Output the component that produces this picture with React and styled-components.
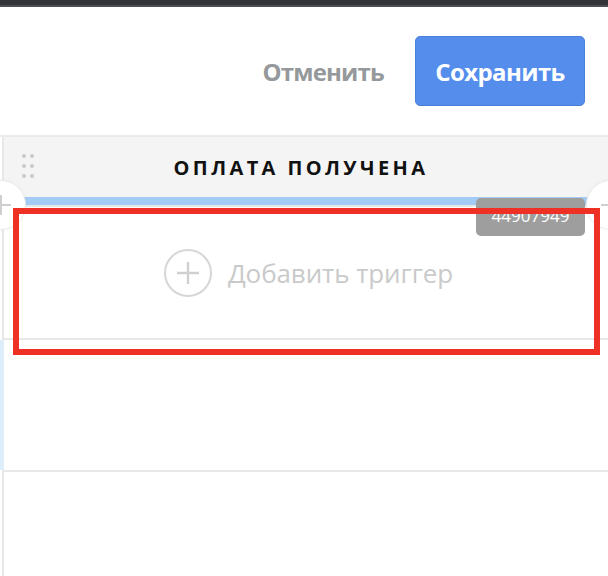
import React from 'react'
import styled, { createGlobalStyle } from 'styled-components';

const GlobalStyle = createGlobalStyle`
  html, body {
    margin: 0;
    padding: 0;
    height: 100%;
    overflow: hidden;
    background: #fff;
    font-family: 'Open Sans', 'Noto Sans', sans-serif;
  }
  #root {
    height: 100%;
  }
`;

const Page = styled.div`
  display: flex;
  flex-direction: column;
  height: 100vh;
`;

const TopBar = styled.div`
  height: 5px;
  background: #333438;
  border-bottom: 2px solid #4e4f52;
  flex-shrink: 0;
`;

const Header = styled.div`
  height: 128px;
  display: flex;
  align-items: center;
  justify-content: flex-end;
  gap: 31px;
  padding-right: 23px;
  flex-shrink: 0;
`;

const CancelButton = styled.button`
  border: none;
  background: none;
  padding: 0;
  font-family: 'Open Sans', sans-serif;
  font-weight: 700;
  font-size: 24px;
  letter-spacing: -0.8px;
  color: #95999b;
  cursor: pointer;
`;

const SaveButton = styled.button`
  width: 170px;
  height: 70px;
  border: 1px solid #4a80dc;
  border-radius: 5px;
  background: #558ded;
  color: #fff;
  font-family: 'Open Sans', sans-serif;
  font-weight: 700;
  font-size: 24px;
  letter-spacing: -0.6px;
  cursor: pointer;
`;

const Board = styled.div`
  flex: 1;
  display: flex;
  border-top: 2px solid #ebebeb;
  padding-left: 2px;
  overflow: hidden;
`;

const Column = styled.div`
  position: relative;
  flex: 1;
  display: flex;
  flex-direction: column;
  border-left: 2px solid #e8e8e8;
`;

const ColumnHeader = styled.div`
  height: 60px;
  background: #f4f4f4;
  display: flex;
  align-items: center;
  justify-content: center;
  padding-right: 10px;
  position: relative;
`;

const DragHandle = styled.div`
  position: absolute;
  left: 18px;
  top: 17px;
  display: grid;
  grid-template-columns: 4px 4px;
  gap: 6px 4px;
  span {
    width: 4px;
    height: 4px;
    border-radius: 50%;
    background: #c9c9c9;
  }
`;

const Title = styled.div`
  font-family: 'Open Sans', sans-serif;
  font-weight: 700;
  font-size: 20px;
  letter-spacing: 3.4px;
  color: #111;
  text-transform: uppercase;
`;

const StageBar = styled.div`
  height: 8px;
  background: #a4cbf5;
`;

const Row = styled.div`
  position: relative;
  height: ${({ $h }) => $h}px;
  flex: ${({ $grow }) => ($grow ? 1 : 'none')};
  border-top: ${({ $top }) => ($top ? '2px solid #e8e8e8' : 'none')};
  border-bottom: ${({ $grow }) => ($grow ? 'none' : '2px solid #e8e8e8')};
  display: flex;
  align-items: center;
  justify-content: center;

  &::before {
    content: '';
    display: ${({ $accent }) => ($accent ? 'block' : 'none')};
    position: absolute;
    left: -4px;
    top: 0;
    bottom: 0;
    width: 4px;
    background: #deedfa;
  }
`;

const AddTrigger = styled.button`
  display: flex;
  align-items: center;
  gap: 15px;
  border: none;
  background: none;
  padding: 0 0 0 4px;
  color: #c9caca;
  font-family: 'Open Sans', sans-serif;
  font-weight: 400;
  font-size: 26px;
  letter-spacing: -0.1px;
  cursor: pointer;
`;

const EdgeCircle = styled.div`
  position: absolute;
  top: 43px;
  ${({ $side }) => ($side === 'left' ? 'left: -28px;' : 'right: -28px;')}
  width: 48px;
  height: 48px;
  border-radius: 50%;
  background: #fff;
  border: 1px solid #ececec;
  box-shadow: 0 0 4px rgba(0, 0, 0, 0.04);
  display: flex;
  align-items: center;
  justify-content: center;
  color: #c8c8c8;
  z-index: 2;
`;

const IdBadge = styled.div`
  position: absolute;
  top: 61px;
  right: 23px;
  width: 109px;
  height: 38px;
  border-radius: 5px;
  background: #9e9e9e;
  color: #fff;
  font-family: 'Open Sans', sans-serif;
  font-size: 17px;
  display: flex;
  justify-content: center;
  padding-top: 6px;
  box-sizing: border-box;
  z-index: 3;
`;

const Highlight = styled.div`
  position: absolute;
  left: 9px;
  top: 71px;
  width: 587px;
  height: 147px;
  border: 6px solid #ee3124;
  box-sizing: border-box;
  z-index: 4;
  pointer-events: none;
`;

const PlusCircle = () => (
  <svg width="50" height="50" viewBox="0 0 50 50" fill="none">
    <circle cx="25" cy="25" r="23" stroke="#d6d6d6" strokeWidth="2" />
    <path d="M25 14v22M14 25h22" stroke="#d0d0d0" strokeWidth="2.4" />
  </svg>
);

const Plus = () => (
  <svg width="30" height="30" viewBox="0 0 30 30" fill="none">
    <path d="M15 5v20M5 15h20" stroke="#cfcfcf" strokeWidth="2" />
  </svg>
);

const App = () => {
  return (
    <Page>
      <GlobalStyle />
      <TopBar />
      <Header>
        <CancelButton>Отменить</CancelButton>
        <SaveButton>Сохранить</SaveButton>
      </Header>
      <Board>
        <Column>
          <ColumnHeader>
            <DragHandle>
              <span /><span /><span /><span /><span /><span />
            </DragHandle>
            <Title>Оплата получена</Title>
          </ColumnHeader>
          <StageBar />
          <EdgeCircle $side="left"><Plus /></EdgeCircle>
          <EdgeCircle $side="right"><Plus /></EdgeCircle>
          <IdBadge>44907949</IdBadge>
          <Row $h={131} $top>
            <AddTrigger>
              <PlusCircle />
              Добавить триггер
            </AddTrigger>
          </Row>
          <Row $h={130} $accent />
          <Row $grow />
          <Highlight />
        </Column>
      </Board>
    </Page>
  )
}

export default App
